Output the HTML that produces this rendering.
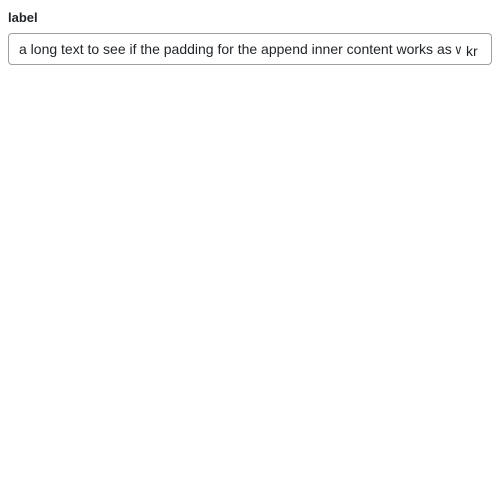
<!DOCTYPE html>
<html><head><style>
body{margin:0;width:500px;height:500px;background:#fff;font-family:"Liberation Sans",Arial,sans-serif;color:#212529;}
.label{position:absolute;left:8px;top:10px;font-size:13px;font-weight:bold;line-height:16px;}
.box{position:absolute;left:8px;top:33px;width:482px;height:30px;border:1px solid #a0a0a0;border-radius:4px;box-sizing:content-box;}
.txt{position:absolute;left:10px;top:7px;width:442px;overflow:hidden;white-space:nowrap;font-size:14px;line-height:16px;}
.app{position:absolute;left:457px;top:9px;font-size:14px;line-height:16px;}
</style></head><body>
<div class="label">label</div>
<div class="box"><div class="txt">a long text to see if the padding for the append inner content works as well</div><div class="app">kr</div></div>
</body></html>
